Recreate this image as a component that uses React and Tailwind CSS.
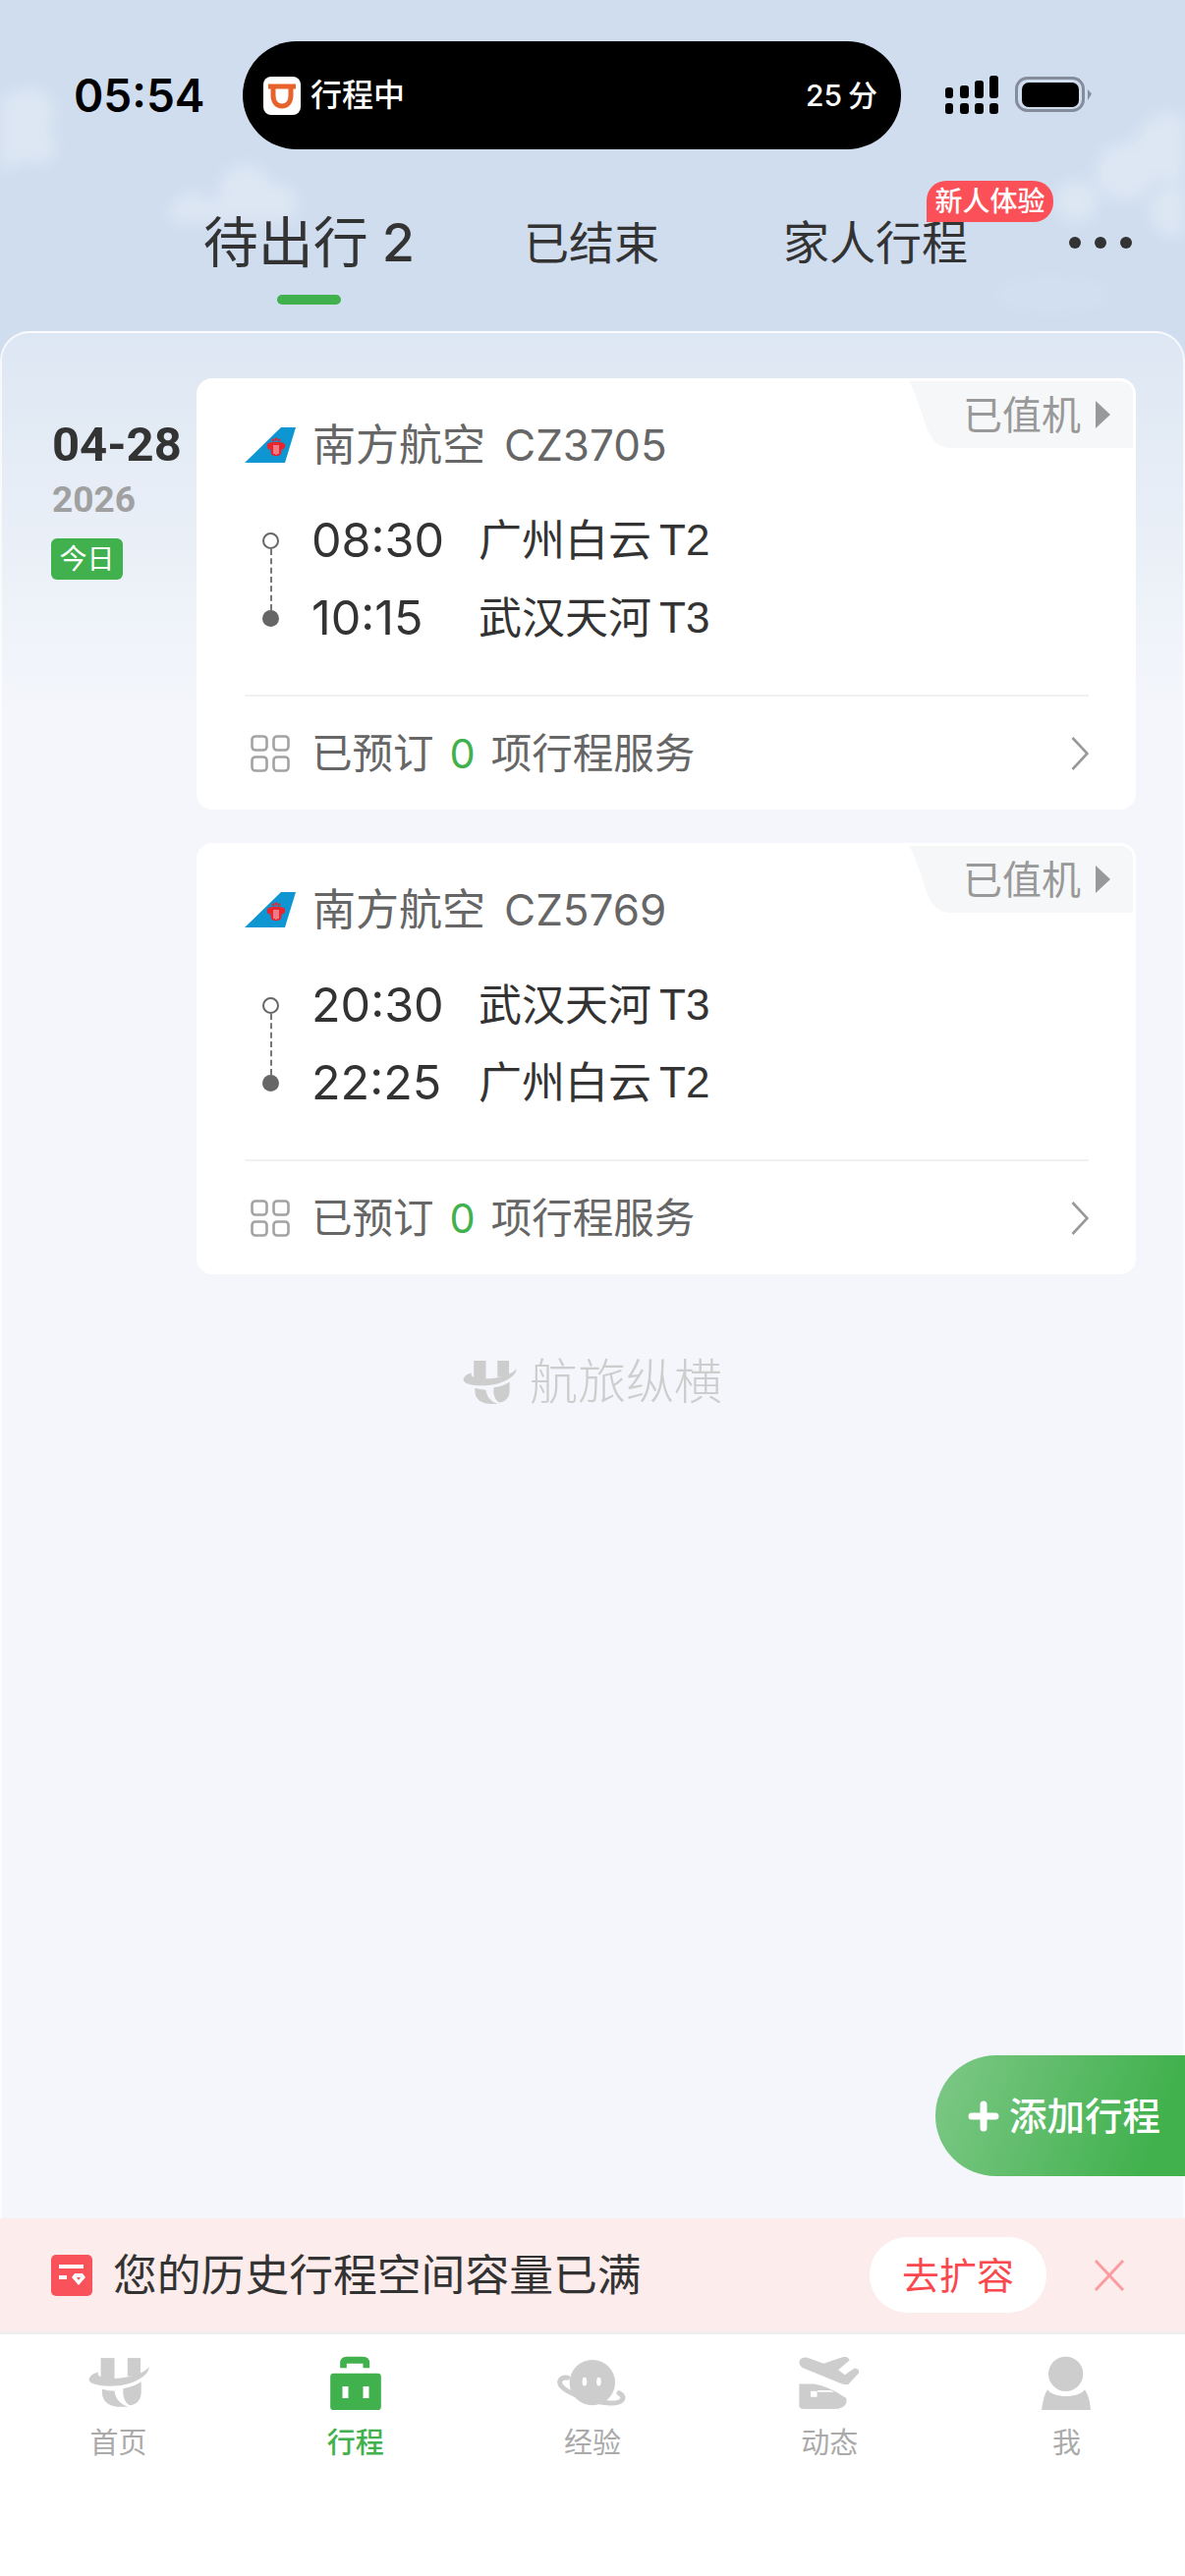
import React from 'react';

const flights = [
  { no: 'CZ3705', depTime: '08:30', depPort: '广州白云', depT: 'T2', arrTime: '10:15', arrPort: '武汉天河', arrT: 'T3' },
  { no: 'CZ5769', depTime: '20:30', depPort: '武汉天河', depT: 'T3', arrTime: '22:25', arrPort: '广州白云', arrT: 'T2' },
];

// 航旅纵横 logo mark
const LogoMark = ({ className, color = '#cdcdcd' }) => (
  <svg viewBox="50 45 187 150" className={className} fill={color}>
    <rect x="88" y="45" width="42" height="64" />
    <rect x="170" y="45" width="40" height="56" />
    <path d="M52 108 C58 94 72 90 80 88 C76 100 88 108 122 108 C170 108 225 92 235 72 C240 92 200 124 140 130 C90 134 48 126 52 108 Z" />
    <path d="M92 140 C105 144 118 146 130 146 C132 168 145 186 172 195 H150 C115 195 92 180 92 150 Z" />
    <path d="M212 118 V150 C212 175 195 190 176 190 C160 180 154 160 157 138 C178 136 198 128 212 118 Z" />
  </svg>
);

const TripIcon = () => (
  <svg viewBox="795 35 155 165" className="h-[55px] w-[52px]">
    <path fill="#41b14e" d="M825 72 V57 Q825 37 845 37 H895 Q915 37 915 57 V72 H895 V58 H845 V72 Z" />
    <rect x="795" y="88" width="155" height="112" rx="10" fill="#41b14e" />
    <rect x="832" y="128" width="18" height="36" fill="#fff" />
    <rect x="895" y="128" width="18" height="36" fill="#fff" />
  </svg>
);

const PlanetIcon = () => (
  <svg viewBox="45 48 212 142" className="h-[47px] w-[71px]">
    <path fill="none" stroke="#cdcdcd" strokeWidth="15" strokeLinecap="round" d="M76 103 C56 100 46 115 56 128 C76 152 150 178 205 181 C248 183 256 162 234 150" />
    <circle cx="152" cy="118" r="70" fill="#cdcdcd" />
    <ellipse cx="128" cy="115" rx="7" ry="13" fill="#fff" />
    <ellipse cx="172" cy="115" rx="7" ry="13" fill="#fff" />
  </svg>
);

const PlaneIcon = () => (
  <svg viewBox="805 45 185 160" className="h-[53px] w-[62px]" fill="#cdcdcd">
    <path d="M805 60 Q810 44 830 47 L880 65 L940 45 Q955 42 960 55 L925 85 L945 100 L975 80 Q992 82 988 95 L955 130 Q945 130 935 127 L815 78 Q805 72 805 60 Z" />
    <path d="M805 128 H850 C890 135 915 150 950 172 V185 Q945 205 910 205 H820 Q805 205 805 195 Z" />
    <rect x="840" y="150" width="20" height="18" fill="#fff" />
    <path fill="#fff" d="M862 148 H902 L914 153 H862 Z" />
  </svg>
);

const UserIcon = () => (
  <svg viewBox="60 35 150 165" className="h-[55px] w-[50px]" fill="#cdcdcd">
    <circle cx="134" cy="90" r="53" />
    <path d="M60 200 C65 170 70 150 78 138 C95 165 175 165 192 138 C200 150 208 170 210 200 Z" />
  </svg>
);

const tabs = [
  { label: '首页', icon: <LogoMark className="h-[50px] w-[62px]" /> },
  { label: '行程', icon: <TripIcon />, active: true },
  { label: '经验', icon: <PlanetIcon /> },
  { label: '动态', icon: <PlaneIcon /> },
  { label: '我', icon: <UserIcon /> },
];

// 南航尾翼
const AirlineLogo = () => (
  <svg viewBox="9 13 52 36" className="h-[36px] w-[52px] shrink-0">
    <path fill="#0e96d2" d="M9 49 L46 13 H61 L50 49 Z" />
    <path fill="#e8242f" d="M32 30 C35 27 47 27 50 30 C51 34 48 36 47 35 L46 40 C44 43 38 43 36 40 L35 35 C33 36 31 34 32 30 Z" />
    <circle cx="38" cy="26" r="1.4" fill="#e8242f" />
    <circle cx="41" cy="25" r="1.4" fill="#e8242f" />
    <circle cx="44" cy="26" r="1.4" fill="#e8242f" />
    <path stroke="#fff" strokeWidth="0.8" d="M39 31 V40 M41 31 V41 M43 31 V40" />
  </svg>
);

const FlightCard = ({ flight }) => (
  <div className="relative h-[439px] w-[956px] rounded-[16px] bg-white pl-[49px] pr-[48px] pt-[38px]">
    {/* 已值机 标签 */}
    <div className="absolute right-[3px] top-[3px] flex h-[68px] w-[228px] items-center justify-end pr-[23px]">
      <svg viewBox="0 0 228 68" className="absolute inset-0 h-full w-full">
        <path fill="#f6f7f8" d="M0 0 H214 Q228 0 228 14 V68 H42 C26 68 20 54 15 38 C10 22 5 8 0 0 Z" />
      </svg>
      <span className="relative mt-[2px] text-[40px] leading-[50px] text-[#999999]">已值机</span>
      <svg viewBox="0 0 15 28" className="relative ml-[15px] h-[28px] w-[15px]">
        <path fill="#999999" d="M0 0 L15 14 L0 28 Z" />
      </svg>
    </div>

    <div className="flex h-[60px] items-center">
      <AirlineLogo />
      <span className="ml-[17px] text-[44px] leading-[60px] text-[#666666]">南方航空</span>
      <span className="ml-[19px] text-[44px] leading-[60px] text-[#666666]">{flight.no}</span>
    </div>

    <div className="mt-[27px] flex">
      <div className="ml-[18px] flex h-[158px] w-[17px] flex-col items-center pt-[32px]">
        <div className="h-[17px] w-[17px] shrink-0 rounded-full border-2 border-[#666666]" />
        <div className="h-[62px] w-0 border-l-2 border-dashed border-[#777777]" />
        <div className="h-[17px] w-[17px] shrink-0 rounded-full bg-[#666666]" />
      </div>
      <div className="ml-[33px] flex flex-col">
        {[[flight.depTime, flight.depPort, flight.depT], [flight.arrTime, flight.arrPort, flight.arrT]].map(([time, port, term]) => (
          <div key={time} className="flex h-[79px] items-center text-[#333333]">
            <span className="w-[170px] text-[48.5px] font-normal leading-[60px]">{time}</span>
            <span className="text-[44px] leading-[60px]">{port}</span>
            <span className="ml-[8px] font-['Liberation_Sans',sans-serif] text-[44px] leading-[60px]">{term}</span>
          </div>
        ))}
      </div>
    </div>

    <div className="mt-[39px] h-[2px] bg-[#f1f1f1]" />

    <div className="flex h-[113px] items-center pt-[2px] text-[41.5px] text-[#666666]">
      <svg viewBox="0 0 40 38" className="ml-[6px] h-[38px] w-[40px] shrink-0" fill="none" stroke="#a3a3a3" strokeWidth="2.6">
        <rect x="1.5" y="1.5" width="15" height="14" rx="3.5" />
        <rect x="23.5" y="1.5" width="15" height="14" rx="3.5" />
        <rect x="1.5" y="22.5" width="15" height="14" rx="3.5" />
        <rect x="23.5" y="22.5" width="15" height="14" rx="3.5" />
      </svg>
      <span className="ml-[22px] leading-[50px]">已预订</span>
      <span className="ml-[16px] leading-[50px] text-[#41b14e]">0</span>
      <span className="ml-[16px] leading-[50px]">项行程服务</span>
      <svg viewBox="0 0 18 34" className="ml-auto h-[34px] w-[18px]" fill="none" stroke="#999999" strokeWidth="2.6">
        <path d="M1.5 1 L16.5 17 L1.5 33" />
      </svg>
    </div>
  </div>
);

const App = () => {
  return (
    <div className="relative flex h-[2622px] w-[1206px] flex-col overflow-hidden bg-[#cfddef] font-['Inter','Noto_Sans_CJK_SC',sans-serif]">
      {/* 背景云 */}
      <svg viewBox="0 0 1206 337" className="absolute left-0 top-0 h-[337px] w-[1206px] blur-[8px]" fill="#ffffff">
        <g opacity="0.3">
          <circle cx="-5" cy="135" r="40" />
          <circle cx="30" cy="115" r="26" />
          <circle cx="40" cy="150" r="18" />
          <circle cx="195" cy="208" r="14" />
          <circle cx="250" cy="195" r="28" />
          <circle cx="285" cy="205" r="18" />
          <rect x="170" y="205" width="130" height="22" rx="11" />
          <circle cx="1190" cy="150" r="36" />
          <circle cx="1145" cy="175" r="30" />
          <circle cx="1095" cy="205" r="22" />
          <circle cx="1195" cy="215" r="26" />
        </g>
        <g opacity="0.08">
          <ellipse cx="1070" cy="300" rx="60" ry="20" />
        </g>
      </svg>

      {/* 状态栏 */}
      <div className="relative mt-[42px] flex h-[110px] items-center pl-[75px]">
        <span className="w-[172px] text-[46px] font-semibold leading-[60px] text-black">05:54</span>
        <div className="flex h-[110px] w-[670px] items-center justify-between rounded-full bg-black pl-[21px] pr-[24px] text-white">
          <div className="flex items-center">
            <div className="flex h-[39px] w-[38px] items-center justify-center rounded-[8px] bg-white">
              <svg viewBox="0 0 30 30" className="h-[30px] w-[30px]" fill="none" stroke="#e8622c" strokeWidth="5">
                <path d="M1 6 H29" />
                <path d="M6 6 V15 C6 22 10 26 15 26 C20 26 24 22 24 15 V6" />
              </svg>
            </div>
            <span className="ml-[10px] text-[32px] font-medium leading-[40px]">行程中</span>
          </div>
          <div className="flex items-center">
            <span className="text-[30px] font-medium leading-[40px]">25</span>
            <span className="ml-[6px] text-[30px] font-medium leading-[40px]">分</span>
          </div>
        </div>
        <svg viewBox="0 0 150 40" className="ml-[45px] h-[40px] w-[150px]">
          <rect x="0" y="12" width="8" height="11" rx="3" />
          <rect x="15" y="10" width="9" height="13" rx="3" />
          <rect x="30" y="5" width="9" height="18" rx="3" />
          <rect x="45" y="0" width="9" height="23" rx="3" />
          <rect x="0" y="28" width="8" height="11" rx="3" />
          <rect x="15" y="28" width="9" height="11" rx="3" />
          <rect x="30" y="28" width="9" height="11" rx="3" />
          <rect x="45" y="28" width="9" height="11" rx="3" />
          <rect x="72.5" y="2.5" width="68" height="33" rx="11" fill="none" stroke="#858c9c" strokeWidth="3" />
          <rect x="78" y="7" width="58" height="25" rx="7" />
          <path d="M145 14 L149 18.5 L145 25 Z" fill="#858c9c" />
        </svg>
      </div>

      {/* 顶部 Tab */}
      <div className="relative flex h-[185px] items-start pl-[207px] pt-[65px] text-[#333333]">
        <div className="flex w-[215px] shrink-0 flex-col items-center">
          <div className="flex h-[60px] items-center whitespace-nowrap">
            <span className="text-[56px] leading-[60px]">待出行</span>
            <span className="ml-[14px] text-[54px] font-medium leading-[60px]">2</span>
          </div>
          <div className="mt-[23px] h-[10px] w-[65px] rounded-full bg-[#41b14e]" />
        </div>
        <span className="ml-[111px] whitespace-nowrap text-[46px] leading-[60px]">已结束</span>
        <div className="relative ml-[126px] whitespace-nowrap">
          <span className="text-[47px] leading-[60px]">家人行程</span>
          <span className="absolute left-[146px] top-[-33px] flex h-[42px] w-[129px] items-center justify-center rounded-[20px] rounded-bl-none bg-[#fb5058] text-[28px] font-medium leading-[42px] text-white">
            新人体验
          </span>
        </div>
        <div className="ml-[103px] flex h-[60px] items-center gap-[14px]">
          <div className="h-[12px] w-[12px] rounded-full bg-[#333333]" />
          <div className="h-[12px] w-[12px] rounded-full bg-[#333333]" />
          <div className="h-[12px] w-[12px] rounded-full bg-[#333333]" />
        </div>
      </div>

      {/* 主内容 */}
      <div className="relative flex-1 rounded-t-[30px] border-x-2 border-t-2 border-white/70 bg-[linear-gradient(180deg,#dde7f3_0,#f4f6fb_380px)] pt-[46px]">
        <div className="flex">
          <div className="w-[198px] shrink-0 pl-[50px] pt-[43px]">
            <div className="ml-[1px] whitespace-nowrap font-['Roboto',sans-serif] text-[49px] font-bold leading-[50px] text-[#333333]">04-28</div>
            <div className="ml-[1px] mt-[11px] font-['Roboto',sans-serif] text-[37px] font-bold leading-[40px] text-[#a0a0a0]">2026</div>
            <div className="mt-[19px] flex h-[42px] w-[73px] items-center justify-center rounded-[6px] bg-[#41b14e] text-[28px] leading-[42px] text-white">今日</div>
          </div>
          <div className="flex flex-col gap-[34px]">
            {flights.map((f) => (
              <FlightCard key={f.no} flight={f} />
            ))}
          </div>
        </div>

        <div className="mt-[82px] flex items-center justify-center">
          <LogoMark className="h-[44px] w-[55px]" />
          <span className="ml-[13px] text-[49px] font-light leading-[56px] text-[#cdcdcd]">航旅纵横</span>
        </div>

        {/* 添加行程 */}
        <div className="absolute bottom-[43px] right-[-2px] flex h-[123px] w-[254px] items-center rounded-l-full bg-[linear-gradient(110deg,#7ec887,#41b14e_85%)] pl-[33px] text-white">
          <svg viewBox="0 0 32 32" className="h-[32px] w-[32px]" fill="none" stroke="#ffffff" strokeWidth="7" strokeLinecap="round">
            <path d="M4 16 H28 M16 4 V28" />
          </svg>
          <span className="ml-[10px] text-[38.5px] font-medium leading-[50px]">添加行程</span>
        </div>
      </div>

      {/* 容量提示 */}
      <div className="flex h-[115px] items-center bg-[#fdecec] pl-[52px]">
        <svg viewBox="0 0 42 42" className="h-[42px] w-[42px] shrink-0">
          <rect width="42" height="42" rx="5" fill="#f9525a" />
          <rect x="8" y="10" width="25" height="4" fill="#fff" />
          <rect x="8" y="21" width="8" height="4" fill="#fff" />
          <path d="M21 23 L24 19 H32 L35 23 L28 31 Z" fill="#fff" />
          <path d="M26 23 H30 L28 26 Z" fill="#f9525a" />
        </svg>
        <span className="ml-[21px] whitespace-nowrap text-[44.8px] leading-[60px] text-[#333333]">您的历史行程空间容量已满</span>
        <div className="ml-auto flex h-[77px] w-[180px] items-center justify-center rounded-[38px] bg-white text-[38px] leading-[50px] text-[#f9494f]">去扩容</div>
        <svg viewBox="0 0 34 34" className="ml-[47px] mr-[60px] h-[34px] w-[34px]" fill="none" stroke="#fb9ca0" strokeWidth="3">
          <path d="M3 2 L31 32 M31 2 L3 32" />
        </svg>
      </div>

      {/* 底部导航 */}
      <div className="grid h-[249px] grid-cols-5 border-t-[3px] border-[#eeeeee] bg-white pt-[20px]">
        {tabs.map((tab) => (
          <div key={tab.label} className="flex flex-col items-center">
            <div className="flex h-[58px] items-center justify-center">{tab.icon}</div>
            <span className={`mt-[13px] text-[29px] leading-[40px] ${tab.active ? 'font-medium text-[#41b14e]' : 'text-[#aaaaaa]'}`}>
              {tab.label}
            </span>
          </div>
        ))}
      </div>
    </div>
  );
};

export default App;
